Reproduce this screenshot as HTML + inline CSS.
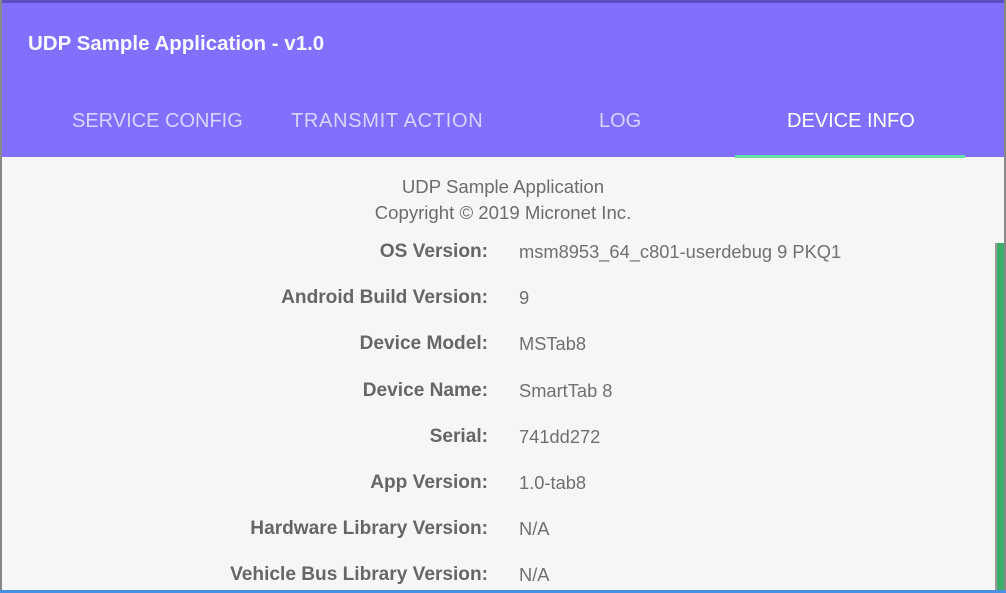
<!DOCTYPE html>
<html><head><style>
*{margin:0;padding:0;box-sizing:border-box}
body{width:1006px;height:593px;overflow:hidden;background:#f6f7f5;font-family:"Liberation Sans",sans-serif;position:relative}
.top{position:absolute;left:0;top:0;width:1006px;height:3px;background:#5a4fc0}
.hdr{position:absolute;left:2px;top:3px;width:1002px;height:154px;background:#8170fc}
.title{position:absolute;left:28px;top:32px;color:#fff;font-size:20.5px;font-weight:bold;opacity:.95}
.tab{position:absolute;top:110px;font-size:20px;color:#d9d3ff;white-space:nowrap}
.ind{position:absolute;left:735px;top:155px;width:230px;height:3px;background:#62e0a8}
.lb{position:absolute;left:0;width:488px;text-align:right;font-size:19.1px;font-weight:bold;color:#666}
.vl{position:absolute;left:519px;font-size:18.3px;color:#707070;white-space:nowrap}
.c{position:absolute;left:0;width:1006px;text-align:center;font-size:18.6px;color:#6c6c6c}
.lft{position:absolute;left:0;top:0;width:2px;height:593px;background:#888}
.rt{position:absolute;right:0;top:0;width:2px;height:593px;background:#888}
.gb{position:absolute;left:997px;top:243px;width:7px;height:348px;background:#3cae6a}
.gl{position:absolute;left:995px;top:243px;width:2px;height:348px;background:#999}
.bot{position:absolute;left:0;top:590px;width:1006px;height:3px;background:#4a90e2}
</style></head><body>
<div class="hdr"></div><div class="top"></div>
<div class="title">UDP Sample Application - v1.0</div>
<div class="tab" style="left:72px">SERVICE CONFIG</div>
<div class="tab" style="left:291px;letter-spacing:0.7px">TRANSMIT ACTION</div>
<div class="tab" style="left:599px">LOG</div>
<div class="tab" style="left:787px;color:#fff">DEVICE INFO</div>
<div class="ind"></div>
<div class="c" style="top:176px">UDP Sample Application</div>
<div class="c" style="top:202px">Copyright © 2019 Micronet Inc.</div>
<div class="lb" style="top:241px">OS Version:</div><div class="vl" style="top:241px">msm8953_64_c801-userdebug 9 PKQ1</div>
<div class="lb" style="top:287px">Android Build Version:</div><div class="vl" style="top:287px">9</div>
<div class="lb" style="top:333px">Device Model:</div><div class="vl" style="top:333px">MSTab8</div>
<div class="lb" style="top:380px">Device Name:</div><div class="vl" style="top:380px">SmartTab 8</div>
<div class="lb" style="top:426px">Serial:</div><div class="vl" style="top:426px">741dd272</div>
<div class="lb" style="top:472px">App Version:</div><div class="vl" style="top:472px">1.0-tab8</div>
<div class="lb" style="top:518px">Hardware Library Version:</div><div class="vl" style="top:518px">N/A</div>
<div class="lb" style="top:564px">Vehicle Bus Library Version:</div><div class="vl" style="top:564px">N/A</div>
<div class="lft"></div><div class="rt"></div><div class="gl"></div><div class="gb"></div><div class="bot"></div>
</body></html>
